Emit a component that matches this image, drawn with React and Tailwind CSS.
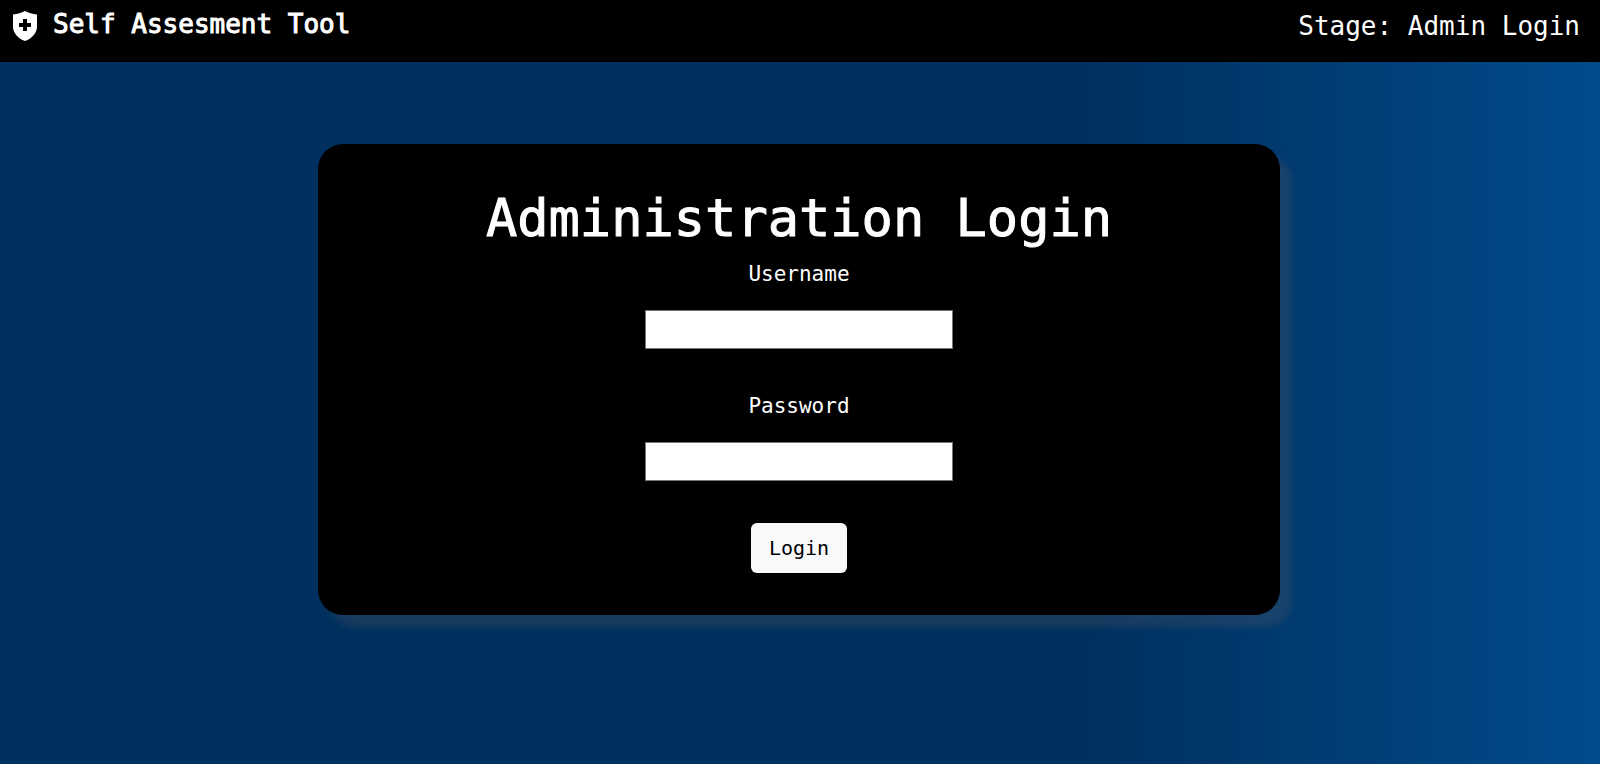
import { useState } from "react";

function ShieldIcon() {
  return (
    <svg viewBox="0 0 24 30" className="h-[30px] w-6 shrink-0 fill-white" aria-hidden="true">
      <path
        fillRule="evenodd"
        d="M12 0 C15.4 1.9 19.6 3 24 3.6 V15.5 C24 22 19 27.6 12 30 C5 27.6 0 22 0 15.5 V3.6 C4.4 3 8.6 1.9 12 0 Z M10 8 V12 H6 V16 H10 V20 H14 V16 H18 V12 H14 V8 Z"
      />
    </svg>
  );
}

function Field({ id, label, type, value, onChange }) {
  return (
    <div className="flex w-full flex-col items-center">
      <label htmlFor={id} className="mb-5 text-[21px] leading-8">
        {label}
      </label>
      <input
        id={id}
        name={id}
        type={type}
        value={value}
        onChange={(e) => onChange(e.target.value)}
        className="h-[39px] w-full max-w-[308px] border border-[#767676] bg-white px-2 text-black"
      />
    </div>
  );
}

export default function App() {
  const [username, setUsername] = useState("");
  const [password, setPassword] = useState("");

  return (
    <div className="flex min-h-screen flex-col bg-linear-to-r from-[#00305f] from-68% to-[#004b8c] font-['DejaVu_Sans_Mono',monospace] text-white">
      <header className="flex h-[62px] items-start justify-between bg-black pr-5 pl-[13px] text-[26px]">
        <div className="flex items-start gap-4 pt-[11px]">
          <ShieldIcon />
          <span className="leading-[26px] [-webkit-text-stroke:1px]">Self Assesment Tool</span>
        </div>
        <span className="pt-[13px] leading-[26px]">Stage: Admin Login</span>
      </header>
      <main className="flex justify-center pt-[82px] pr-0.5 pb-10">
        <form
          onSubmit={(e) => e.preventDefault()}
          className="flex w-[60.2%] flex-col items-center rounded-[25px] bg-black px-10 pt-10 pb-[42px] shadow-[12px_12px_7px_rgba(96,96,96,0.25)]"
        >
          <h1 className="text-[52px] leading-[68px] whitespace-nowrap [-webkit-text-stroke:1px]">
            Administration Login
          </h1>
          <div className="mt-1.5 flex w-full flex-col gap-[41px]">
            <Field id="username" label="Username" type="text" value={username} onChange={setUsername} />
            <Field id="password" label="Password" type="password" value={password} onChange={setPassword} />
          </div>
          <button type="submit" className="mt-[42px] h-[50px] rounded-md bg-[#f8f9fa] px-[18px] text-[20px] text-black">
            Login
          </button>
        </form>
      </main>
    </div>
  );
}
